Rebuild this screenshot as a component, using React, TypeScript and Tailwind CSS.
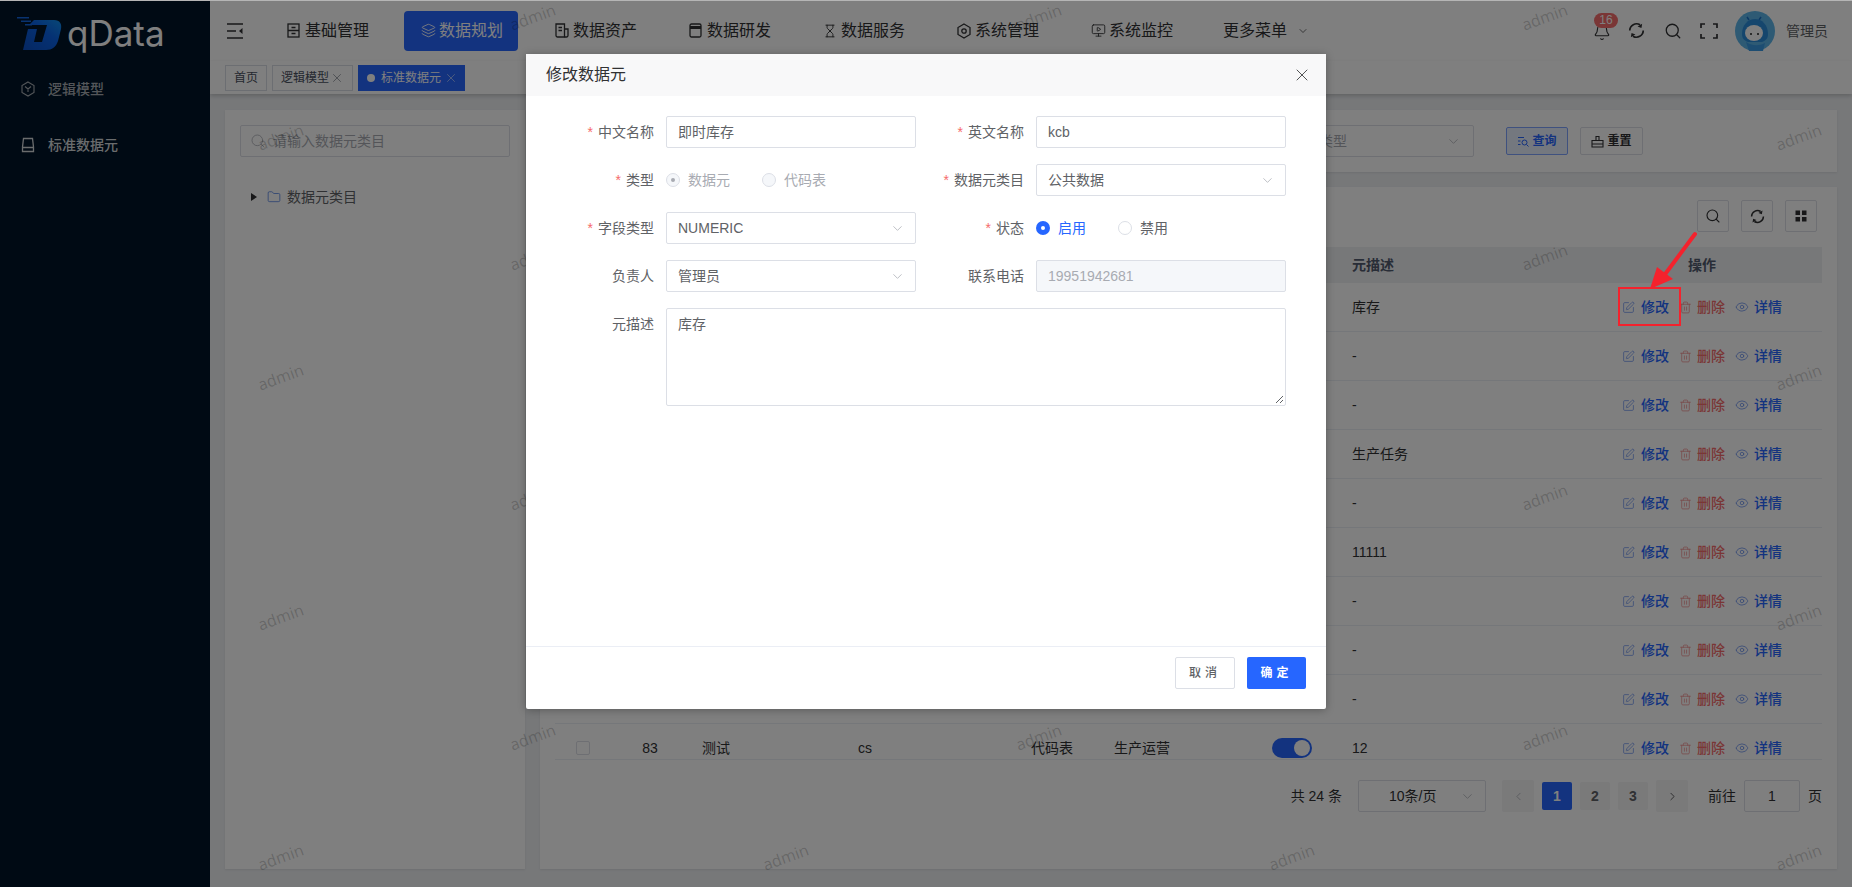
import { Bell, ChevronDown, ChevronLeft, ChevronRight, Eye, Folder, Search, SquarePen, Trash2, X, Layers, Hourglass, MonitorPlay } from "lucide-react";

const fontStack = "font-['Liberation_Sans','Noto_Sans_CJK_SC',sans-serif]";

// tiled watermark, tiles fully behind the dialog are left out
const marks: { x: number; y: number }[] = [];
[280, 532, 785, 1038, 1291, 1544, 1798].forEach((x, i) => {
  for (let k = 0; k < 4; k++) {
    const y = (i % 2 === 0 ? 138 : 18) + 240 * k;
    if (!(x > 540 && x < 1310 && y > 54 && y < 709)) marks.push({ x, y });
  }
});

// only the description column and the last row show beside the dialog
const rows = [
  { id: 1, desc: "库存" },
  { id: 2, desc: "-" },
  { id: 3, desc: "-" },
  { id: 4, desc: "生产任务" },
  { id: 5, desc: "-" },
  { id: 6, desc: "11111" },
  { id: 7, desc: "-" },
  { id: 8, desc: "-" },
  { id: 9, desc: "-" },
  { id: 10, no: "83", name: "测试", en: "cs", type: "代码表", cat: "生产运营", desc: "12" },
];

function DocIcon() {
  return (
    <svg width="13" height="15" viewBox="0 0 13 15" fill="none" stroke="currentColor" strokeWidth="1.3">
      <rect x="1" y="1" width="11" height="13" />
      <path d="M1 7.500h11M4.500 4.500h4M4.500 10.500h4" />
    </svg>
  );
}

function AssetIcon() {
  return (
    <svg width="14" height="15" viewBox="0 0 14 15" fill="none" stroke="currentColor" strokeWidth="1.3">
      <path d="M1 1h8.500v13H2.500A1.500 1.500 0 0 1 1 12.500z" />
      <path d="M9.500 6H13v6.500a1.500 1.500 0 0 1-1.500 1.500h-2M3.500 4.500h3.500M3.500 7.500h3.500" />
    </svg>
  );
}

function DevIcon() {
  return (
    <svg width="13" height="15" viewBox="0 0 13 15" fill="none" stroke="currentColor" strokeWidth="1.3">
      <rect x="1" y="1" width="11" height="13" rx="1.500" />
      <path d="M1 4.500h11" strokeWidth="3" />
    </svg>
  );
}

function HexIcon() {
  return (
    <svg width="14" height="16" viewBox="0 0 14 16" fill="none" stroke="currentColor" strokeWidth="1.3">
      <path d="M7 1l6 3.500v7L7 15l-6-3.500v-7z" />
      <circle cx="7" cy="8" r="2.200" />
    </svg>
  );
}

function RefreshIcon({ size = 17 }: { size?: number }) {
  return (
    <svg width={size} height={size} viewBox="0 0 24 24" fill="none" stroke="currentColor" strokeWidth="2.4">
      <path d="M2.500 12A9.500 9.500 0 0 1 17 4" />
      <path d="M21.500 12A9.500 9.500 0 0 1 7 20" />
      <path d="M20 2.500l-1 6-5.500-2z" fill="currentColor" stroke="none" />
      <path d="M4 21.500l1-6 5.500 2z" fill="currentColor" stroke="none" />
    </svg>
  );
}

function NavItem({ icon, label, active }: { icon: React.ReactNode; label: string; active?: boolean }) {
  return (
    <div className={`flex h-10 w-[114px] shrink-0 items-center rounded pl-[17px] text-base ${active ? "bg-[#2666ff] text-white" : "text-[#303133]"}`}>
      <span className="flex w-[18px] shrink-0 items-center">{icon}</span>
      <span className="whitespace-nowrap">{label}</span>
    </div>
  );
}

function Field({ label, required, children, className = "" }: { label: string; required?: boolean; children: React.ReactNode; className?: string }) {
  return (
    <div className={`flex items-start ${className}`}>
      <label className="flex h-8 w-[120px] shrink-0 items-center justify-end pr-3 text-sm text-[#606266]">
        {required && <span className="mr-[5px] text-[#f56c6c]">*</span>}
        {label}
      </label>
      <div className="min-w-0 flex-1">{children}</div>
    </div>
  );
}

function FakeSelect({ value }: { value: string }) {
  return (
    <div className="flex h-8 items-center justify-between rounded-[2px] border border-[#dcdfe6] pl-[11px] pr-[10px] text-sm text-[#606266]">
      <span>{value}</span>
      <ChevronDown size={15} strokeWidth={1.2} className="text-[#a8abb2]" />
    </div>
  );
}

function TextBox({ value, disabled }: { value: string; disabled?: boolean }) {
  return (
    <div className={`flex h-8 items-center rounded-[2px] border border-[#dcdfe6] px-[11px] text-sm ${disabled ? "bg-[#f5f7fa] text-[#a8abb2]" : "text-[#606266]"}`}>
      {value}
    </div>
  );
}

function Radio({ label, checked, disabled }: { label: string; checked?: boolean; disabled?: boolean }) {
  return (
    <div className={`flex h-8 items-center gap-[8px] text-sm ${checked && !disabled ? "text-[#2666ff]" : disabled ? "text-[#a8abb2]" : "text-[#606266]"}`}>
      {checked && !disabled && (
        <span className="flex h-[14px] w-[14px] items-center justify-center rounded-full bg-[#2666ff]">
          <span className="h-1 w-1 rounded-full bg-white" />
        </span>
      )}
      {checked && disabled && (
        <span className="flex h-[14px] w-[14px] items-center justify-center rounded-full border border-[#dcdfe6] bg-[#f5f7fa]">
          <span className="h-1 w-1 rounded-full bg-[#a8abb2]" />
        </span>
      )}
      {!checked && <span className={`h-[14px] w-[14px] rounded-full border border-[#dcdfe6] ${disabled ? "bg-[#f5f7fa]" : ""}`} />}
      {label}
    </div>
  );
}

function Row({ r }: { r: (typeof rows)[number] }) {
  return (
    <div className="flex h-[49px] shrink-0 items-center border-b border-[#ebeef5] text-sm text-[#303133]">
      <div className="flex w-[56px] justify-center">
        {r.no && <span className="h-[14px] w-[14px] rounded-[2px] border border-[#dcdfe6] bg-white" />}
      </div>
      <div className="w-[78px] text-center">{r.no}</div>
      <div className="w-[156px] pl-[13px]">{r.name}</div>
      <div className="w-[173px] pl-[13px]">{r.en}</div>
      <div className="w-[83px] pl-[13px]">{r.type}</div>
      <div className="w-[158px] pl-[13px]">{r.cat}</div>
      <div className="w-[80px] pl-[13px]">
        {r.no && (
          <span className="flex h-5 w-10 items-center justify-end rounded-full bg-[#2666ff] pr-[2px]">
            <span className="h-4 w-4 rounded-full bg-white" />
          </span>
        )}
      </div>
      <div className="w-[271px] pl-[13px]">{r.desc}</div>
      <div className="flex flex-1 items-center pl-[12px] font-medium">
        <SquarePen size={13} strokeWidth={1.4} className="mr-[6px] text-[#6f94ee]" />
        <span className="text-[#2666ff]">修改</span>
        <Trash2 size={13} strokeWidth={1.4} className="ml-[10px] mr-[5px] text-[#f18f8f]" />
        <span className="text-[#f56c6c]">删除</span>
        <Eye size={14} strokeWidth={1.4} className="ml-[10px] mr-[5px] text-[#6f94ee]" />
        <span className="text-[#2666ff]">详情</span>
      </div>
    </div>
  );
}

export default function App() {
  return (
    <div className={`relative flex h-[887px] w-[1852px] overflow-hidden bg-[#eef0f3] ${fontStack}`}>
      {/* Sidebar */}
      <aside className="relative z-10 flex w-[210px] shrink-0 flex-col bg-[#001529]">
        <div className="flex h-[60px] items-center pl-[17px] pt-[6px]">
          <svg width="45" height="36" viewBox="0 0 45 36">
            <defs>
              <linearGradient id="lg" x1="0" y1="1" x2="1" y2="0">
                <stop offset="0" stopColor="#0a4fc4" />
                <stop offset="0.6" stopColor="#0a63e8" />
                <stop offset="1" stopColor="#1190ef" />
              </linearGradient>
            </defs>
            <path d="M17 5h20c6 0 8 4 7 9l-3 12c-2 6-6 9-12 9H6l5-21h9l-3 13h8l5-17H12z" fill="url(#lg)" />
            <path d="M0 2h12v1.5H0zM4 5.500h10V7H4zM8 9h7v1.500H8z" fill="#1267e0" />
          </svg>
          <span className="ml-[5px] font-['Inter',sans-serif] text-[35px] leading-none text-white">qData</span>
        </div>
        <div className="mt-[1px] flex h-14 items-center gap-[13px] pl-[21px] text-sm font-medium text-[#a8adb3]">
          <svg width="14" height="16" viewBox="0 0 14 16" fill="none" stroke="currentColor" strokeWidth="1.1">
            <path d="M7 1l6 3.500v7L7 15l-6-3.500v-7zM4 5.500L7 8l3-2.500M7 8v3" />
          </svg>
          逻辑模型
        </div>
        <div className="flex h-14 items-center gap-[13px] pl-[21px] text-sm font-medium text-[#d5d8db]">
          <svg width="14" height="16" viewBox="0 0 14 16" fill="none" stroke="currentColor" strokeWidth="1.3">
            <path d="M2.500 1.500h9l1 8.500v4.500h-11V10zM1.500 10.500h11" />
          </svg>
          标准数据元
        </div>
      </aside>

      {/* Main */}
      <div className="flex min-w-0 flex-1 flex-col">
        <header className="flex h-[61px] shrink-0 items-center bg-white pl-[17px] pr-[24px] shadow-[0_1px_2px_rgba(0,0,0,0.15)]">
          <svg width="17" height="16" viewBox="0 0 17 16" fill="none" stroke="#303133" strokeWidth="1.700">
            <path d="M0 1h16M0 8h9M0 15h16" />
            <path d="M15.500 5v6L12 8z" fill="#303133" stroke="none" />
          </svg>
          <nav className="ml-[26px] flex gap-5">
            <NavItem icon={<DocIcon />} label="基础管理" />
            <NavItem icon={<Layers size={15} strokeWidth={1.4} />} label="数据规划" active />
            <NavItem icon={<AssetIcon />} label="数据资产" />
            <NavItem icon={<DevIcon />} label="数据研发" />
            <NavItem icon={<Hourglass size={14} strokeWidth={1.6} />} label="数据服务" />
            <NavItem icon={<HexIcon />} label="系统管理" />
            <NavItem icon={<MonitorPlay size={15} strokeWidth={1.4} />} label="系统监控" />
          </nav>
          <div className="ml-[35px] flex items-center gap-[10px] whitespace-nowrap text-base text-[#303133]">
            更多菜单
            <ChevronDown size={12} strokeWidth={1.4} />
          </div>
          <div className="ml-auto flex items-center text-[#303133]">
            <div className="relative w-[35px]">
              <Bell size={18} strokeWidth={1.5} className="mt-[2px]" />
              <span className="absolute -top-[8px] left-[1px] flex h-[15px] w-[24px] items-center justify-center rounded-full bg-[#f56c6c] text-xs leading-none text-white">16</span>
            </div>
            <span className="mr-[19px]"><RefreshIcon /></span>
            <Search size={18} strokeWidth={1.700} className="mr-[18px]" />
            <svg width="18" height="16" viewBox="0 0 18 16" fill="none" stroke="currentColor" strokeWidth="1.700" className="mr-[17px]">
              <path d="M1 5V1h4M13 1h4v4M17 11v4h-4M5 15H1v-4" />
            </svg>
            <svg width="40" height="40" viewBox="0 0 40 40" className="mr-[11px] shrink-0">
              <circle cx="20" cy="20" r="20" fill="#5cb4e8" />
              <path d="M12 6l2 3M26 6l-2 3" stroke="#1a70c8" strokeWidth="1.500" />
              <path d="M7 23c0-9 6-15 13-15s13 6 13 15c0 5-3 7-6 8H13c-3-1-6-3-6-8z" fill="#2a8ddb" />
              <ellipse cx="19" cy="22" rx="9" ry="8" fill="#ffffff" />
              <circle cx="16" cy="23" r="1" fill="#222222" />
              <circle cx="23" cy="23" r="1" fill="#222222" />
              <path d="M11 31c4 3 12 5 19 1l-2 8H14z" fill="#3a9be4" />
            </svg>
            <span className="whitespace-nowrap text-sm text-[#606266]">管理员</span>
          </div>
        </header>

        {/* Tabs */}
        <div className="flex h-[33px] shrink-0 items-start gap-[5px] bg-white pl-[15px] pt-[4px] shadow-[0_2px_4px_rgba(0,0,0,0.18)]">
          <div className="flex h-[26px] w-[42px] items-center justify-center border border-[#d8dce5] text-xs text-[#495060]">首页</div>
          <div className="flex h-[26px] w-[81px] items-center border border-[#d8dce5] pl-[8px] text-xs text-[#495060]">
            逻辑模型
            <X size={14} strokeWidth={0.9} className="ml-[1px]" />
          </div>
          <div className="flex h-[26px] w-[107px] items-center bg-[#2666ff] pl-[9px] text-xs text-white">
            <span className="mr-[6px] h-2 w-2 rounded-full bg-white" />
            标准数据元
            <X size={14} strokeWidth={0.9} className="ml-[3px]" />
          </div>
        </div>

        {/* Content */}
        <div className="flex min-h-0 flex-1 gap-[15px] pb-[18px] pl-[15px] pr-[15px] pt-[16px]">
          <section className="w-[300px] shrink-0 bg-white px-[15px] pt-[15px] shadow-[0_1px_2px_rgba(0,0,0,0.08)]">
            <div className="flex h-8 items-center gap-[7px] rounded-[2px] border border-[#dcdfe6] pl-[9px] text-sm text-[#a8abb2]">
              <Search size={16} strokeWidth={1.2} />
              请输入数据元类目
            </div>
            <div className="mt-[30px] flex items-center pl-[11px] text-sm text-[#606266]">
              <span className="mr-[10px] h-0 w-0 border-y-[4px] border-l-[6px] border-y-transparent border-l-[#303133]" />
              <Folder size={14} strokeWidth={1.300} className="mr-[6px] text-[#4a7be0]" />
              数据元类目
            </div>
          </section>

          <div className="flex min-w-0 flex-1 flex-col gap-[15px]">
            <section className="flex h-[62px] shrink-0 items-center bg-white pl-[15px] shadow-[0_1px_2px_rgba(0,0,0,0.08)]">
              <div className="ml-auto flex h-8 w-[209px] items-center justify-between rounded-[2px] border border-[#dcdfe6] pl-[11px] pr-[12px] text-sm text-[#a8abb2]">
                <span>请选择类型</span>
                <ChevronDown size={15} strokeWidth={1.2} />
              </div>
              <div className="ml-[32px] flex h-[28px] w-[62px] items-center justify-center gap-[3px] rounded-[2px] border border-[#7fa3ff] bg-[#e9f0ff] text-xs font-semibold text-[#2666ff]">
                <svg width="12" height="12" viewBox="0 0 12 12" fill="none" stroke="currentColor" strokeWidth="1">
                  <path d="M1 2.500h6M1 6h2.500M1 9.500h2.500" />
                  <circle cx="7.500" cy="7.500" r="2.500" />
                  <path d="M9.500 9.500l2 2" />
                </svg>
                查询
              </div>
              <div className="ml-3 mr-[194px] flex h-[28px] w-[63px] items-center justify-center gap-[3px] rounded-[2px] border border-[#dcdfe6] text-xs font-semibold text-[#303133]">
                <svg width="13" height="13" viewBox="0 0 13 13" fill="none" stroke="currentColor" strokeWidth="1.100">
                  <path d="M5 5V1.500h3V5M1 5.500h11V12H1zM1 9h11" />
                </svg>
                重置
              </div>
            </section>

            <section className="flex min-h-0 flex-1 flex-col bg-white px-[15px] pt-[13px] shadow-[0_1px_2px_rgba(0,0,0,0.08)]">
              <div className="flex justify-end gap-3 pr-[5px]">
                <div className="flex h-8 w-8 items-center justify-center rounded-[2px] border border-[#dcdfe6] text-[#303133]">
                  <Search size={16} strokeWidth={1.700} />
                </div>
                <div className="flex h-8 w-8 items-center justify-center rounded-[2px] border border-[#dcdfe6] text-[#303133]">
                  <RefreshIcon size={15} />
                </div>
                <div className="flex h-8 w-8 items-center justify-center rounded-[2px] border border-[#dcdfe6] text-[#303133]">
                  <svg width="12" height="12" viewBox="0 0 12 12" fill="currentColor">
                    <rect x="0.500" y="0.500" width="4.500" height="4.500" />
                    <rect x="7" y="0.500" width="4.500" height="4.500" />
                    <rect x="0.500" y="7" width="4.500" height="4.500" />
                    <rect x="7" y="7" width="4.500" height="4.500" />
                  </svg>
                </div>
              </div>

              <div className="mt-[15px] flex h-[36px] shrink-0 items-center bg-[#eff0f2] text-sm font-semibold text-[#515a6e]">
                <div className="w-[56px]" />
                <div className="w-[78px]" />
                <div className="w-[156px]" />
                <div className="w-[173px]" />
                <div className="w-[83px]" />
                <div className="w-[158px]" />
                <div className="w-[80px]" />
                <div className="w-[271px] pl-[13px]">元描述</div>
                <div className="pl-[78px]">操作</div>
              </div>
              <div className="flex h-[477px] shrink-0 flex-col overflow-hidden border-b border-[#ebeef5]">
                {rows.map((r) => (
                  <Row key={r.id} r={r} />
                ))}
              </div>

              {/* Pagination */}
              <div className="mt-[20px] flex h-8 items-center justify-end text-sm text-[#303133]">
                <span className="mr-[16px]">共 24 条</span>
                <div className="mr-4 flex h-8 w-[128px] items-center justify-between rounded-[2px] border border-[#dcdfe6] pl-[30px] pr-[10px]">
                  10条/页
                  <ChevronDown size={15} strokeWidth={1.2} className="text-[#a8abb2]" />
                </div>
                <div className="flex h-8 w-8 items-center justify-center rounded-[2px] bg-[#f4f4f5] text-[#a8abb2]">
                  <ChevronLeft size={13} strokeWidth={1.4} />
                </div>
                <div className="ml-2 flex h-[28px] w-[30px] items-center justify-center rounded-[2px] bg-[#2666ff] font-bold text-white">1</div>
                <div className="ml-2 flex h-[28px] w-[30px] items-center justify-center rounded-[2px] bg-[#f4f4f5] font-bold text-[#606266]">2</div>
                <div className="ml-2 flex h-[28px] w-[30px] items-center justify-center rounded-[2px] bg-[#f4f4f5] font-bold text-[#606266]">3</div>
                <div className="ml-2 flex h-8 w-8 items-center justify-center rounded-[2px] bg-[#f4f4f5]">
                  <ChevronRight size={13} strokeWidth={1.4} />
                </div>
                <span className="ml-[20px]">前往</span>
                <div className="ml-2 flex h-8 w-[56px] items-center justify-center rounded-[2px] border border-[#dcdfe6]">1</div>
                <span className="ml-[8px]">页</span>
              </div>
            </section>
          </div>
        </div>
      </div>

      {/* Watermark tiles */}
      {marks.map((m) => (
        <span
          key={`${m.x}-${m.y}`}
          className="pointer-events-none absolute -rotate-[20deg] font-['Open_Sans',sans-serif] text-base leading-none text-black/20"
          style={{ left: m.x - 23, top: m.y - 9 }}
        >
          admin
        </span>
      ))}

      {/* Dialog mask */}
      <div className="absolute inset-0 z-20 bg-black/50" />
      <div className="absolute left-0 right-0 top-0 z-40 h-px bg-[#b5b5b5]" />

      {/* Dialog */}
      <div className="absolute left-[526px] top-[54px] z-30 flex h-[655px] w-[800px] flex-col rounded-[2px] bg-white shadow-[0_1px_8px_rgba(0,0,0,0.3)]">
        <div className="flex h-[42px] shrink-0 items-center justify-between bg-[#f8f8f9] pl-5 pr-[14px]">
          <span className="text-base text-[#303133]">修改数据元</span>
          <X size={20} strokeWidth={1} className="text-[#303133]" />
        </div>
        <div className="flex-1 pl-5 pt-5">
          <div className="grid grid-cols-[370px_370px] gap-y-4">
            <Field label="中文名称" required><TextBox value="即时库存" /></Field>
            <Field label="英文名称" required><TextBox value="kcb" /></Field>
            <Field label="类型" required>
              <div className="flex gap-[32px]">
                <Radio label="数据元" checked disabled />
                <Radio label="代码表" disabled />
              </div>
            </Field>
            <Field label="数据元类目" required><FakeSelect value="公共数据" /></Field>
            <Field label="字段类型" required><FakeSelect value="NUMERIC" /></Field>
            <Field label="状态" required>
              <div className="flex gap-[32px]">
                <Radio label="启用" checked />
                <Radio label="禁用" />
              </div>
            </Field>
            <Field label="负责人"><FakeSelect value="管理员" /></Field>
            <Field label="联系电话"><TextBox value="19951942681" disabled /></Field>
            <Field label="元描述" className="col-span-2">
              <div className="relative h-[98px] rounded-[2px] border border-[#dcdfe6] px-[11px] py-[4px] text-sm leading-[22px] text-[#606266]">
                库存
                <svg width="9" height="9" viewBox="0 0 9 9" stroke="#606266" className="absolute bottom-[1px] right-[1px]">
                  <path d="M1 8l7-7M5 8l3-3" />
                </svg>
              </div>
            </Field>
          </div>
        </div>
        <div className="flex h-[63px] shrink-0 items-start justify-end gap-3 border-t border-[#ebeef5] pr-5 pt-[10px]">
          <div className="flex h-8 w-[60px] items-center justify-center rounded-[2px] border border-[#dcdfe6] text-xs font-medium tracking-[4px] text-[#606266]">取消</div>
          <div className="flex h-8 w-[59px] items-center justify-center rounded-[2px] bg-[#2666ff] text-xs font-bold tracking-[4px] text-white">确定</div>
        </div>
      </div>

      {/* Red annotation on the screenshot */}
      <div className="absolute left-[1618px] top-[287px] z-40 h-[39px] w-[63px] border-2 border-[#f4222d]" />
      <svg width="60" height="62" viewBox="0 0 60 62" className="absolute left-[1643px] top-[231px] z-40">
        <path d="M52 3L20 46" stroke="#f4222d" strokeWidth="4" strokeLinecap="round" />
        <path d="M7 58L14 36L30 48z" fill="#f4222d" />
      </svg>
    </div>
  );
}
